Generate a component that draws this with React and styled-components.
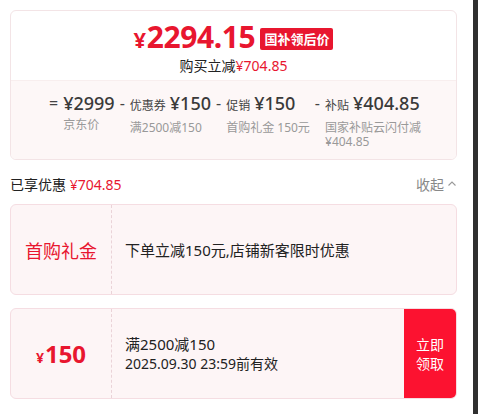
import React from "react";
import styled, { createGlobalStyle } from "styled-components";

const RED = "#e8162f";

const Global = createGlobalStyle`
  html, body { margin: 0; padding: 0; background: #fff; }
  body { font-family: "Noto Sans", "Noto Sans CJK SC", sans-serif; color: #222; }
  * { box-sizing: border-box; }
`;

const Page = styled.div`
  display: flex;
  width: 478px;
  height: 414px;
  overflow: hidden;
`;

const Content = styled.div`
  flex: 1;
  padding: 10px 16px 0 10px;
  display: flex;
  flex-direction: column;
`;

const ScrollTrack = styled.div`
  width: 5px;
  background: #2f2f2f;
`;

const PriceCard = styled.div`
  border: 1px solid #f3e4e6;
  border-radius: 6px;
  overflow: hidden;
`;

const PriceTop = styled.div`
  display: flex;
  flex-direction: column;
  align-items: center;
  padding: 10px 0 4px;
`;

const PriceLine = styled.div`
  display: flex;
  align-items: center;
  gap: 5px;
  height: 34px;
`;

const BigPrice = styled.span`
  color: ${RED};
  font-weight: 700;
  font-size: 30px;
  letter-spacing: -0.4px;
  line-height: 30px;
`;

const BigYen = styled.span`
  font-size: 22px;
  margin-right: 1px;
`;

const Badge = styled.span`
  background: ${RED};
  color: #fff;
  font-size: 13px;
  font-weight: 700;
  line-height: 22px;
  padding: 0 4px;
  border-radius: 2px;
  margin-top: 2px;
`;

const SaveLine = styled.div`
  font-size: 14px;
  line-height: 20px;
  margin-top: 1px;
  color: #222;
`;

const Red = styled.span`
  color: ${RED};
`;

const Breakdown = styled.div`
  background: #fdf7f7;
  border-top: 1px solid #f8eeee;
  display: flex;
  justify-content: center;
  align-items: flex-start;
  padding: 11px 0 9px;
  min-height: 79px;
`;

const Operator = styled.span`
  font-size: 16px;
  line-height: 22px;
  color: #444;
  margin: 0 5px;
`;

const Col = styled.div`
  display: flex;
  flex-direction: column;
  max-width: ${(p) => p.$max || "none"};
`;

const Top = styled.div`
  display: flex;
  align-items: baseline;
  gap: 4px;
  line-height: 22px;
  white-space: nowrap;
`;

const SmallLabel = styled.span`
  font-size: 12px;
  color: #444;
`;

const Amount = styled.span`
  font-size: 18px;
  font-weight: 500;
  color: #3a3a3a;
`;

const Sub = styled.div`
  font-size: 12px;
  line-height: 14px;
  color: #999;
  margin-top: 4px;
`;

const SummaryRow = styled.div`
  display: flex;
  justify-content: space-between;
  align-items: center;
  height: 20px;
  margin-top: 14px;
  font-size: 14px;
`;

const Collapse = styled.span`
  color: #888;
  display: flex;
  align-items: center;
  gap: 3px;
`;

const Coupon = styled.div`
  display: flex;
  height: 91px;
  margin-top: ${(p) => p.$mt}px;
  background: #fdf5f6;
  border: 1px solid #f5dde2;
  border-radius: 6px;
  overflow: hidden;
`;

const CouponLeft = styled.div`
  width: 101px;
  flex: none;
  display: flex;
  align-items: center;
  justify-content: center;
  border-right: 1px dashed #ead3d8;
  color: ${RED};
`;

const GiftTitle = styled.span`
  font-size: 18px;
`;

const CouponValue = styled.span`
  font-size: 24px;
  font-weight: 700;
  display: flex;
  align-items: baseline;
`;

const SmallYen = styled.span`
  font-size: 14px;
  margin-right: 1px;
`;

const CouponBody = styled.div`
  flex: 1;
  display: flex;
  flex-direction: column;
  justify-content: center;
  padding-left: 13px;
  color: #222;
`;

const BodyMain = styled.div`
  font-size: 15px;
  line-height: 20px;
`;

const BodySub = styled.div`
  font-size: 14px;
  line-height: 20px;
`;

const ClaimButton = styled.button`
  width: 52px;
  flex: none;
  border: none;
  background: #fc1230;
  color: #fff;
  font-family: inherit;
  font-size: 14px;
  line-height: 19px;
  padding: 0 6px;
`;

export default function App() {
  return (
    <Page>
      <Global />
      <Content>
        <PriceCard>
          <PriceTop>
            <PriceLine>
              <BigPrice>
                <BigYen>¥</BigYen>2294.15
              </BigPrice>
              <Badge>国补领后价</Badge>
            </PriceLine>
            <SaveLine>
              购买立减<Red>¥704.85</Red>
            </SaveLine>
          </PriceTop>
          <Breakdown>
            <Operator>=</Operator>
            <Col>
              <Top>
                <Amount>¥2999</Amount>
              </Top>
              <Sub>京东价</Sub>
            </Col>
            <Operator>-</Operator>
            <Col>
              <Top>
                <SmallLabel>优惠券</SmallLabel>
                <Amount>¥150</Amount>
              </Top>
              <Sub>满2500减150</Sub>
            </Col>
            <Operator>-</Operator>
            <Col>
              <Top>
                <SmallLabel>促销</SmallLabel>
                <Amount>¥150</Amount>
              </Top>
              <Sub>首购礼金 150元</Sub>
            </Col>
            <Operator>-</Operator>
            <Col $max="98px">
              <Top>
                <SmallLabel>补贴</SmallLabel>
                <Amount>¥404.85</Amount>
              </Top>
              <Sub>国家补贴云闪付减¥404.85</Sub>
            </Col>
          </Breakdown>
        </PriceCard>

        <SummaryRow>
          <span>
            已享优惠 <Red>¥704.85</Red>
          </span>
          <Collapse>
            收起
            <svg width="10" height="10" viewBox="0 0 10 10" fill="none">
              <path d="M1.5 6.5 L5 3 L8.5 6.5" stroke="#999" strokeWidth="1.1" />
            </svg>
          </Collapse>
        </SummaryRow>

        <Coupon $mt={10}>
          <CouponLeft>
            <GiftTitle>首购礼金</GiftTitle>
          </CouponLeft>
          <CouponBody>
            <BodyMain>下单立减150元,店铺新客限时优惠</BodyMain>
          </CouponBody>
        </Coupon>

        <Coupon $mt={13}>
          <CouponLeft>
            <CouponValue>
              <SmallYen>¥</SmallYen>150
            </CouponValue>
          </CouponLeft>
          <CouponBody>
            <BodyMain>满2500减150</BodyMain>
            <BodySub>2025.09.30 23:59前有效</BodySub>
          </CouponBody>
          <ClaimButton>立即领取</ClaimButton>
        </Coupon>
      </Content>
      <ScrollTrack />
    </Page>
  );
}
